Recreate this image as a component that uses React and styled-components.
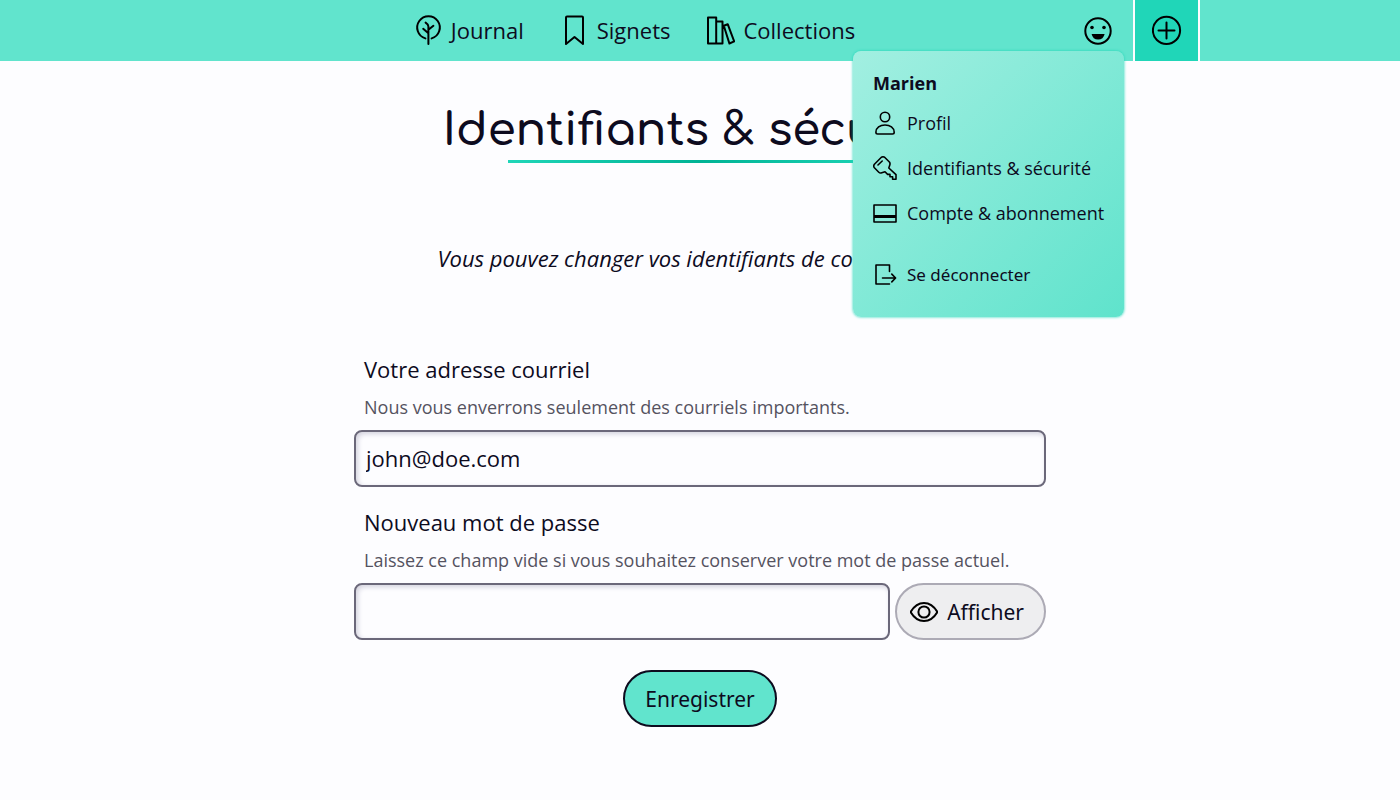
import React from "react";
import styled, { createGlobalStyle, css } from "styled-components";

const GlobalStyle = createGlobalStyle`
  *, *::before, *::after { box-sizing: border-box; }
  body {
    margin: 0;
    background: #fdfdff;
    color: #0d0b1e;
    font-family: "Open Sans", sans-serif;
    font-size: 22px;
    line-height: 32px;
  }
`;

const Header = styled.header`
  background: #61e4cd;
`;

const HeaderInner = styled.div`
  display: flex;
  align-items: stretch;
  max-width: 1000px;
  height: 61px;
  margin: 0 auto;
`;

const Nav = styled.nav`
  flex: 1;
  display: flex;
  align-items: center;
  justify-content: center;
  gap: 35px;
  padding: 0 0 1px 5px;
`;

const NavLink = styled.a`
  display: flex;
  align-items: center;
  gap: 8px;
  color: inherit;
  text-decoration: none;
`;

const Icon = styled.svg`
  flex: none;
  display: block;
  width: ${(p) => p.$size}px;
  height: ${(p) => p.$size}px;
  fill: none;
  stroke: #000;
  stroke-width: ${(p) => p.$stroke || 2};
  stroke-linecap: round;
  stroke-linejoin: round;
`;

const Account = styled.div`
  position: relative;
  display: flex;
`;

const AccountButton = styled.button`
  display: flex;
  align-items: center;
  padding: 0 20px;
  border: 0;
  background: none;
`;

const AddLink = styled.a`
  display: flex;
  align-items: center;
  justify-content: center;
  width: 67px;
  padding-bottom: 1px;
  border: solid #fdfdff;
  border-width: 0 2px;
  background: #20d6b8;
`;

const Menu = styled.div`
  position: absolute;
  top: 51px;
  right: 9px;
  z-index: 1;
  display: flex;
  flex-direction: column;
  width: 271px;
  padding: 16px 20px 20px;
  border-radius: 8px;
  background: linear-gradient(135deg, #a2efe1, #5fe3cc);
  box-shadow: 0 0 3px #20d6b8;
  font-size: 18px;
`;

const MenuTitle = styled.strong`
  margin-bottom: 1px;
`;

const menuItem = css`
  display: flex;
  align-items: center;
  gap: 10px;
  height: 45px;
  padding: 0;
  color: inherit;
  white-space: nowrap;
`;

const MenuLink = styled.a`
  ${menuItem}
  text-decoration: none;
`;

const MenuButton = styled.button`
  ${menuItem}
  margin-top: 17px;
  border: 0;
  background: none;
  font-family: "Noto Sans", sans-serif;
  font-size: 17px;
`;

const Main = styled.main`
  max-width: 692px;
  margin: 0 auto;
  padding-top: 40px;
`;

const Title = styled.h1`
  display: flex;
  flex-direction: column;
  align-items: center;
  margin: 0;
  font-family: Comfortaa, Lato, sans-serif;
  font-size: 45px;
  font-weight: 600;
  line-height: 59px;
  white-space: nowrap;

  &::after {
    content: "";
    width: 384px;
    height: 3px;
    background: linear-gradient(90deg, #20d6b8, #00b395, #20d6b8);
  }
`;

const Intro = styled.p`
  margin: 79px 0;
  text-align: center;
  font-style: italic;
`;

const Field = styled.div`
  display: flex;
  flex-direction: column;
  margin-bottom: 19px;
`;

const Label = styled.label`
  padding-left: 10px;
`;

const Hint = styled.p`
  margin: 8px 0;
  padding-left: 10px;
  color: #55535f;
  font-size: 18px;
  line-height: 29px;
`;

const FieldRow = styled.div`
  display: flex;
  gap: 5px;
`;

const Input = styled.input`
  flex: 1;
  min-width: 0;
  height: 57px;
  padding: 0 10px 2px;
  border: 2px solid #6b687a;
  border-radius: 8px;
  background: #fdfdff;
  box-shadow: inset 2px 2px 5px #d3d2de;
  color: inherit;
  font: inherit;
`;

const Button = styled.button`
  display: flex;
  align-items: center;
  gap: 9px;
  height: 57px;
  padding: 0 20px;
  border: 2px solid #0d0b1e;
  border-radius: 29px;
  background: #61e4cd;
  color: #0d0b1e;
  font-family: "Noto Sans", sans-serif;
  font-size: 21px;
`;

const ShowButton = styled(Button)`
  padding-left: 13px;
  border-color: #acaab5;
  background: #eeeef0;
`;

const Actions = styled.div`
  display: flex;
  justify-content: center;
  padding-top: 11px;
`;

const TreeIcon = () => (
  <Icon $size={30} viewBox="0 0 30 30" aria-hidden="true">
    <path d="M12.4 23.4A11.3 11.3 0 1 1 18.6 23.4M15.4 29V11.4Q15.4 9.5 12.6 7.6M15.4 14.8L20.4 10.8M15.4 18.2L10.2 13.8" />
  </Icon>
);

const BookmarkIcon = () => (
  <Icon $size={30} viewBox="0 0 30 30" aria-hidden="true">
    <path d="M8 1.5H23Q24 1.5 24 2.5V29L15.5 22L7 29V2.5Q7 1.5 8 1.5Z" />
  </Icon>
);

const BooksIcon = () => (
  <Icon $size={30} viewBox="0 0 30 30" aria-hidden="true">
    <path d="M3 2.5H11.2V28.5H3ZM11.2 6.5H17.5V28.5H11.2M18.8 10.8L22.7 9.2L29.2 26.4L24.4 28.5Z" />
  </Icon>
);

const SmileyIcon = () => (
  <Icon $size={30} viewBox="0 0 30 30" aria-hidden="true">
    <circle cx="15" cy="15" r="12.7" />
    <g fill="#000" stroke="none">
      <circle cx="9" cy="11.5" r="1.8" />
      <circle cx="21" cy="11.5" r="1.8" />
      <path d="M8.6 18H21.6Q20.4 23.6 15.1 23.6T8.6 18Z" />
    </g>
  </Icon>
);

const PlusIcon = () => (
  <Icon $size={30} viewBox="0 0 30 30" aria-hidden="true">
    <circle cx="14.5" cy="15.4" r="13.6" />
    <path d="M14.5 7.4V23.4M6.5 15.4H22.5" />
  </Icon>
);

const UserIcon = () => (
  <Icon $size={24} $stroke={1.6} viewBox="0 0 24 24" aria-hidden="true">
    <circle cx="12" cy="6" r="4.7" />
    <path d="M4.6 23Q2.9 23 2.9 21.3C2.9 16.8 7 14 12 14S21.2 16.8 21.2 21.3Q21.2 23 19.5 23Z" />
  </Icon>
);

const KeyIcon = () => (
  <Icon $size={24} $stroke={1.6} viewBox="0 0 24 24" aria-hidden="true">
    <path d="M1.4 8.2L8.4 1.3Q10 0.3 11.6 1.3L16.4 6Q17.4 7.4 16.8 9L15.8 12L23 18.6V23.2H19.6V20.8H17V18.4H14.6L12 15.8L8 17Q6.8 17.2 5.8 16.2L1.4 11.8Q0 10 1.4 8.2ZM5 9L9.2 5" />
  </Icon>
);

const CardIcon = () => (
  <Icon $size={24} $stroke={1.6} viewBox="0 0 24 24" aria-hidden="true">
    <path d="M1 4H23V21H1Z" />
    <rect x="1" y="14" width="22" height="3" fill="#000" stroke="none" />
  </Icon>
);

const LogoutIcon = () => (
  <Icon $size={24} $stroke={1.6} viewBox="0 0 24 24" aria-hidden="true">
    <path d="M16.5 8.5V2H3V21H16.5M9.5 15H22.4M18.8 11.1L22.6 15L18.8 18.9" />
  </Icon>
);

const EyeIcon = () => (
  <Icon $size={28} viewBox="0 0 28 28" aria-hidden="true">
    <path d="M0.6 14C4 8.2 8.8 5 14 5S24 8.2 27.4 14C24 19.8 19.2 23 14 23S4 19.8 0.6 14Z" />
    <circle cx="14" cy="14" r="5.6" />
  </Icon>
);

export default function App() {
  return (
    <>
      <GlobalStyle />
      <Header>
        <HeaderInner>
          <Nav>
            <NavLink href="#journal"><TreeIcon />Journal</NavLink>
            <NavLink href="#signets"><BookmarkIcon />Signets</NavLink>
            <NavLink href="#collections"><BooksIcon />Collections</NavLink>
          </Nav>
          <Account>
            <AccountButton type="button" aria-label="Marien" aria-expanded="true">
              <SmileyIcon />
            </AccountButton>
            <Menu>
              <MenuTitle>Marien</MenuTitle>
              <MenuLink href="#profil"><UserIcon />Profil</MenuLink>
              <MenuLink href="#securite"><KeyIcon />Identifiants &amp; sécurité</MenuLink>
              <MenuLink href="#compte"><CardIcon />Compte &amp; abonnement</MenuLink>
              <MenuButton type="button"><LogoutIcon />Se déconnecter</MenuButton>
            </Menu>
          </Account>
          <AddLink href="#ajouter" aria-label="Ajouter"><PlusIcon /></AddLink>
        </HeaderInner>
      </Header>
      <Main>
        <Title>Identifiants &amp; sécurité</Title>
        <Intro>Vous pouvez changer vos identifiants de connexion ici.</Intro>
        <form>
          <Field>
            <Label htmlFor="email">Votre adresse courriel</Label>
            <Hint id="email-hint">Nous vous enverrons seulement des courriels importants.</Hint>
            <FieldRow>
              <Input id="email" type="email" defaultValue="john@doe.com" aria-describedby="email-hint" />
            </FieldRow>
          </Field>
          <Field>
            <Label htmlFor="password">Nouveau mot de passe</Label>
            <Hint id="password-hint">
              Laissez ce champ vide si vous souhaitez conserver votre mot de passe actuel.
            </Hint>
            <FieldRow>
              <Input id="password" type="password" aria-describedby="password-hint" />
              <ShowButton type="button"><EyeIcon />Afficher</ShowButton>
            </FieldRow>
          </Field>
          <Actions>
            <Button type="submit">Enregistrer</Button>
          </Actions>
        </form>
      </Main>
    </>
  );
}
